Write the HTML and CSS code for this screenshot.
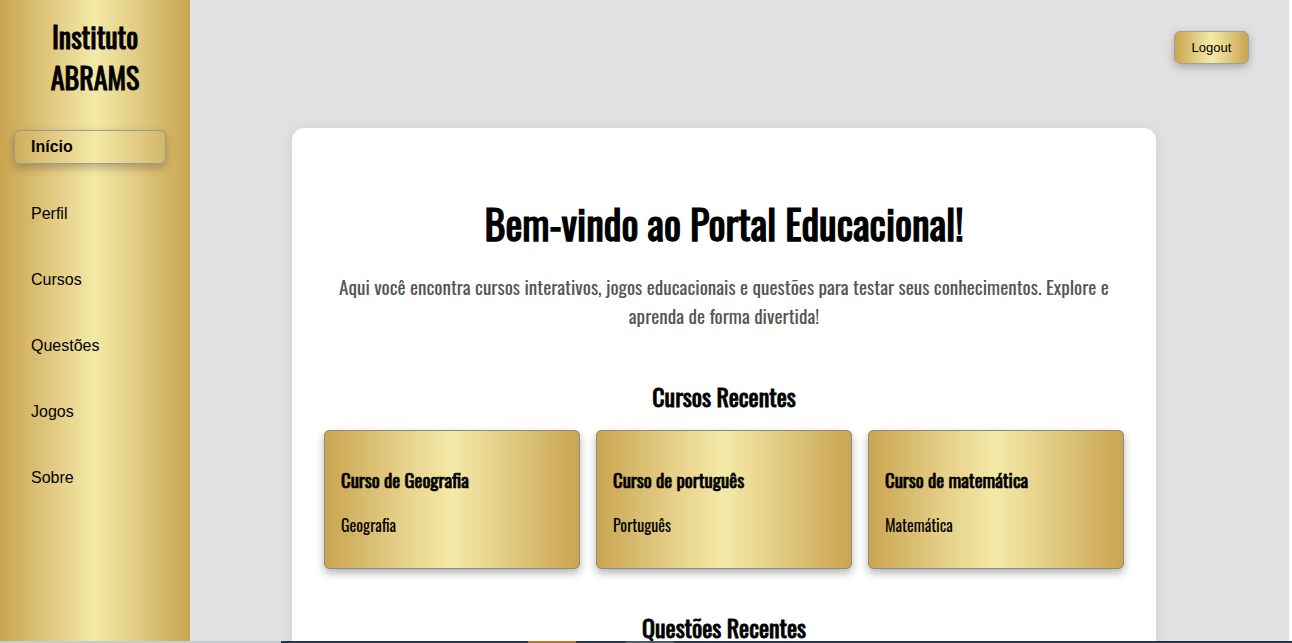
FILE: index.html
```html
<!DOCTYPE html>
<html lang="pt-BR">
<head>
<meta charset="utf-8">
<title>Instituto ABRAMS</title>
<link rel="stylesheet" href="styles.css">
</head>
<body>
<div class="layout">
  <aside class="sidebar">
    <h2 class="brand">Instituto<br>ABRAMS</h2>
    <nav class="nav">
      <a class="nav-item active" href="#">Início</a>
      <a class="nav-item" href="#">Perfil</a>
      <a class="nav-item" href="#">Cursos</a>
      <a class="nav-item" href="#">Questões</a>
      <a class="nav-item" href="#">Jogos</a>
      <a class="nav-item" href="#">Sobre</a>
    </nav>
  </aside>
  <main class="main">
    <div class="topbar">
      <button class="logout">Logout</button>
    </div>
    <section class="panel">
      <h1 class="title">Bem-vindo ao Portal Educacional!</h1>
      <p class="intro">Aqui você encontra cursos interativos, jogos educacionais e questões para testar seus conhecimentos. Explore e aprenda de forma divertida!</p>
      <h2 class="section-title">Cursos Recentes</h2>
      <div class="cards">
        <div class="card"><h3 class="card-title">Curso de Geografia</h3><p class="card-sub">Geografia</p></div>
        <div class="card"><h3 class="card-title">Curso de português</h3><p class="card-sub">Português</p></div>
        <div class="card"><h3 class="card-title">Curso de matemática</h3><p class="card-sub">Matemática</p></div>
      </div>
      <h2 class="section-title later">Questões Recentes</h2>
    </section>
  </main>
</div>
<div class="bottom-strip">
  <span class="seg seg-light"></span><span class="seg seg-dark"></span><span class="seg seg-orange"></span><span class="seg seg-dark2"></span><span class="seg seg-steel"></span><span class="seg seg-dark3"></span>
</div>
</body>
</html>
```
FILE: styles.css
```css
* { box-sizing: border-box; }
html, body { margin: 0; padding: 0; height: 100%; overflow: hidden; }
html { background: #fff; }
body {
  background: #fff;
  font-family: "Liberation Sans", Arial, sans-serif;
  color: #000;
}
.layout {
  display: flex;
  width: 1289px;
  height: 643px;
  background: #e0e1e0;
  overflow: hidden;
}
.sidebar {
  width: 190px;
  flex: none;
  background: linear-gradient(90deg, #c9a550 0%, #e4cd85 30%, #f4eaa8 50%, #e2cb82 72%, #c9a550 100%);
  padding: 16px 0 0;
}
.brand {
  margin: 0 0 32px;
  text-align: center;
  font-family: "Oswald", "Liberation Sans Narrow", "DejaVu Sans Condensed", sans-serif;
  font-size: 28px;
  font-weight: 400;
  line-height: 41px;
  -webkit-text-stroke: 0.95px #000;
}
.nav {
  display: flex;
  flex-direction: column;
  gap: 32px;
  padding: 0 24px 0 14px;
}
.nav-item {
  display: block;
  height: 34px;
  line-height: 32px;
  padding: 0 16px;
  font-size: 16px;
  color: #000;
  text-decoration: none;
  border: 1px solid transparent;
  border-radius: 6px;
}
.nav-item.active {
  font-weight: 700;
  margin-bottom: 1px;
  border-color: #9a9a9a;
  box-shadow: 0 4px 10px rgba(0,0,0,0.25);
}
.main {
  flex: 1;
  display: flex;
  flex-direction: column;
  padding: 0 40px 0 102px;
}
.topbar {
  flex: none;
  display: flex;
  justify-content: flex-end;
  padding: 31px 0 0;
  height: 128px;
}
.logout {
  width: 75px;
  height: 33px;
  font-family: "Liberation Sans", Arial, sans-serif;
  font-size: 13px;
  color: #000;
  border: 1px solid #a0a0a0;
  border-radius: 6px;
  background: linear-gradient(90deg, #c9a550 0%, #f4eaa8 50%, #c9a550 100%);
  box-shadow: 0 3px 8px rgba(0,0,0,0.25);
}
.panel {
  flex: none;
  width: 864px;
  background: #fff;
  border-radius: 12px;
  box-shadow: 0 0 12px rgba(0,0,0,0.08);
  padding: 67px 32px 40px;
  text-align: center;
}
.title {
  margin: 0;
  font-family: "Oswald", "Liberation Sans Narrow", "DejaVu Sans Condensed", sans-serif;
  font-size: 40px;
  font-weight: 400;
  line-height: 56px;
  -webkit-text-stroke: 1.25px #000;
}
.intro {
  margin: 21px 0 0;
  font-family: "Oswald", "Liberation Sans Narrow", "DejaVu Sans Condensed", sans-serif;
  font-size: 19.2px;
  line-height: 29px;
  color: #555;
}
.section-title {
  margin: 49px 0 17px;
  font-family: "Oswald", "Liberation Sans Narrow", "DejaVu Sans Condensed", sans-serif;
  font-size: 24px;
  font-weight: 400;
  line-height: 34px;
  -webkit-text-stroke: 0.85px #000;
}
.section-title.later { margin-top: 41px; }
.cards {
  display: grid;
  grid-template-columns: repeat(3, 1fr);
  gap: 16px;
}
.card {
  height: 139px;
  text-align: left;
  padding: 35px 16px 0;
  border: 1px solid #8a8a8a;
  border-radius: 5px;
  background: linear-gradient(90deg, #c9a550 0%, #e4cd85 28%, #f4eaa8 50%, #e2cb82 72%, #c9a550 100%);
  box-shadow: 0 4px 8px rgba(0,0,0,0.3);
}
.card-title {
  margin: 0;
  font-family: "Oswald", "Liberation Sans Narrow", "DejaVu Sans Condensed", sans-serif;
  font-size: 18.72px;
  font-weight: 400;
  line-height: 28px;
  -webkit-text-stroke: 0.7px #000;
}
.card-sub {
  margin: 20px 0 0;
  font-family: "Oswald", "Liberation Sans Narrow", "DejaVu Sans Condensed", sans-serif;
  font-size: 16px;
  line-height: 22px;
}
.bottom-strip {
  position: fixed;
  left: 0; right: 0; bottom: 0;
  height: 2px;
  display: flex;
}
.seg { display: block; height: 100%; }
.seg-light { width: 281px; background: #c9ccce; }
.seg-dark { width: 247px; background: #283645; }
.seg-orange { width: 48px; background: #b9793a; }
.seg-dark2 { width: 50px; background: #283645; }
.seg-steel { width: 48px; background: #4e5c6a; }
.seg-dark3 { flex: 1; background: #283645; }
```
